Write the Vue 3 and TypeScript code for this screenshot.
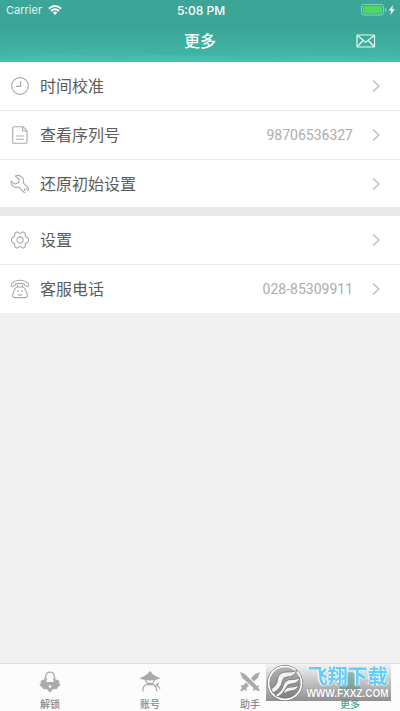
<script setup lang="ts">
interface Row {
  icon: string
  label: string
  value?: string
}

const groups: Row[][] = [
  [
    { icon: 'clock', label: '时间校准' },
    { icon: 'doc', label: '查看序列号', value: '98706536327' },
    { icon: 'wrench', label: '还原初始设置' },
  ],
  [
    { icon: 'gear', label: '设置' },
    { icon: 'phone', label: '客服电话', value: '028-85309911' },
  ],
]

const tabs = [
  { icon: 'unlock', label: '解锁' },
  { icon: 'account', label: '账号' },
  { icon: 'helper', label: '助手' },
  { icon: 'more', label: '更多', active: true },
]
</script>

<template>
  <div class="screen">
    <header class="header">
      <svg class="waves" viewBox="0 0 400 20" preserveAspectRatio="none" aria-hidden="true">
        <path d="M0 12Q30 4 58 11Q105 0 150 12Q200 17 240 10Q285 4 325 13Q370 8 400 10V20H0Z" fill="#4cc4b4" opacity=".2" />
        <path d="M0 17Q60 9 120 15Q180 10 250 16Q320 12 400 16V20H0Z" fill="#55cdbd" opacity=".25" />
      </svg>
      <div class="status">
        <div class="carrier">
          <span>Carrier</span>
          <svg width="14" height="10" viewBox="0 0 14 10" aria-hidden="true">
            <g fill="none" stroke="#fff" stroke-width="1.8">
              <path d="M.8 3.7Q7-1.7 13.2 3.7" />
              <path d="M3 6Q7 2.5 11 6" />
            </g>
            <path d="M4.7 7.5Q7 5.6 9.3 7.5L7 9.9Z" fill="#fff" />
          </svg>
        </div>
        <span class="time">5:08 PM</span>
        <div class="battery">
          <svg width="36" height="12" viewBox="0 0 36 12" aria-hidden="true">
            <rect x="1.500" y=".5" width="22" height="10.5" rx="2.5" fill="none" stroke="#8dcfc4" />
            <rect x="3" y="2" width="19" height="7.5" rx="1.2" fill="#4cd964" />
            <path d="M25 4V8Q26.500 7.500 26.500 6T25 4" fill="#8dcfc4" />
            <path d="M33 1L28.700 6.500H31.200L30.300 11L34.800 5.200H32.200Z" fill="#fff" />
          </svg>
        </div>
      </div>
      <div class="navbar">
        <h1>更多</h1>
        <button class="mail" type="button" aria-label="消息">
          <svg width="20" height="14" viewBox="0 0 20 14" fill="none" stroke="#eafaf7" stroke-width="1.2">
            <rect x="1" y="1" width="17.500" height="12" rx=".8" />
            <path d="M1.500 1.500L9.750 8.300L18 1.500M1.500 12.500L7.200 6.500M18 12.500L12.300 6.500" />
          </svg>
        </button>
      </div>
    </header>

    <main class="content">
      <ul v-for="(group, g) in groups" :key="g" class="group">
        <li v-for="row in group" :key="row.label">
          <button class="row" type="button">
            <svg class="icon" viewBox="0 0 20 20" aria-hidden="true">
              <template v-if="row.icon === 'clock'">
                <circle cx="10" cy="10" r="8.400" />
                <path d="M10.600 5V10.400H6" />
              </template>
              <template v-else-if="row.icon === 'doc'">
                <path d="M3.500 1.700H13L17 5.700V17Q17 18.300 15.700 18.300H3.800Q2.700 18.300 2.700 17V3Q2.700 1.700 3.800 1.700ZM12.700 2V6H16.700M6 11H13.800M6 14.300H13.800" />
              </template>
              <template v-else-if="row.icon === 'wrench'">
                <path d="M5.200 2Q9.200.4 12 3.200Q14.300 5.700 13.200 8.900L18 13.600Q19 15.200 17.700 16.600M15.500 18.300Q14.200 18.700 13.200 17.700L8.700 13Q4.700 14.200 2.200 11.300Q.8 9.500 1.200 7.200L4.700 10.100L8.700 8.600L9.200 5.200L5.200 2" />
                <path d="M14.500 14.500V17M16 14.300L17.800 16.500" />
              </template>
              <template v-else-if="row.icon === 'gear'">
                <path d="M6.500 2.200Q7.700 1.400 8.500 2.700Q10 4.300 11.500 2.700Q12.400 1.400 13.700 2.200Q15.800 3.100 15.300 4.900Q15 7 17.200 7.400Q18.600 7.600 18.600 10T17.200 12.600Q15 13 15.300 15.100Q15.800 16.900 13.700 17.800Q12.400 18.600 11.500 17.300Q10 15.700 8.500 17.300Q7.700 18.600 6.400 17.800Q4.200 16.900 4.700 15.100Q5 13 2.800 12.600Q1.400 12.400 1.400 10T2.800 7.400Q5 7 4.700 4.900Q4.200 3.100 6.500 2.200Z" />
                <circle cx="10" cy="10" r="3.100" />
              </template>
              <template v-else>
                <path d="M2.200 7.700Q.8 6.700 1.500 4.700Q4.500 1.200 10 1.200T18.500 4.700Q19.200 6.700 17.800 7.700L14.700 6.200Q14.700 4.400 10 4.400T5.300 6.200Z" />
                <path d="M7.500 6V8M12.500 6V8M7 8H13Q15.500 9 17.200 15.500Q17.800 18.600 15.500 18.600H4.500Q2.200 18.600 2.800 15.500Q4.500 9 7 8ZM8 11V13.300M12 11V13.300M8 15.500Q10 17 12 15.500" />
              </template>
            </svg>
            <span class="label">{{ row.label }}</span>
            <span v-if="row.value" class="value">{{ row.value }}</span>
            <svg class="chevron" viewBox="0 0 8 14" aria-hidden="true"><path d="M1 1.500L7 7L1 12.500" /></svg>
          </button>
        </li>
      </ul>
    </main>

    <nav class="tabs">
      <a v-for="tab in tabs" :key="tab.label" href="#" class="tab" :class="{ active: tab.active }">
        <svg width="22" height="22" viewBox="0 0 22 22" aria-hidden="true">
          <template v-if="tab.icon === 'unlock'">
            <path d="M4 8.500L1.500 10L2 12L.3 14L3 16L4.500 18.200L7.500 18L11 21.500L14.500 18L17.500 18.200L19 16L21.700 14L20 12L20.500 10L18 8.500L14 11H8Z" fill="currentColor" />
            <path d="M6.500 10V6Q7 1.200 11 1.200T15.500 6V10" fill="none" stroke="currentColor" stroke-width="1.300" />
            <path d="M6 6L4.700 9L7 11L8.500 8M16 6L17.300 9L15 11L13.500 8" fill="currentColor" opacity=".65" />
            <circle cx="11" cy="15.500" r="1.300" fill="#fff" />
          </template>
          <template v-else-if="tab.icon === 'account'">
            <path d="M10 .5H12L13 2.500Q16 5.200 21.700 7.500Q16 9.500 11 9.500T.3 7.500Q6 5.200 9 2.500Z" fill="currentColor" />
            <g fill="none" stroke="currentColor" stroke-width="1.300">
              <path d="M6.500 9Q7 12.500 11 12.500T15.500 9M7 13.500H15M7 13.500Q3.500 15.500 4 20.500M15 13.500Q18 16.500 18 20.500M17.500 12.500L21 18M19.500 12L17 15" />
            </g>
          </template>
          <template v-else-if="tab.icon === 'helper'">
            <path d="M1 1L6 3L18 15L20.500 14L19 17L21 19L19 20.500L17 18.500L14 20L14.500 17L3 6.500ZM21 1L16 3L11.800 7.200L15 10.500L19 6.500ZM7 11.500L4 14.500L1.500 14L3 17L1 19L3 20.500L5 18.500L8 20L7.500 17L10 14.500Z" fill="currentColor" />
          </template>
          <template v-else>
            <path d="M4 8Q4 1 11 1T18 8V11Q21 12 21 16Q21 20 17 20H5Q1 20 1 16Q1 12 4 11Z" fill="currentColor" />
          </template>
        </svg>
        <span>{{ tab.label }}</span>
      </a>
      <div class="stamp">
        <svg class="seal" viewBox="0 0 38 38" aria-hidden="true">
          <defs>
            <linearGradient id="seal-fill" x1="0" y1="0" x2="0" y2="1">
              <stop offset="0" stop-color="#b4b4b4" />
              <stop offset="1" stop-color="#7c7c7c" />
            </linearGradient>
          </defs>
          <circle cx="19" cy="19" r="17.500" fill="url(#seal-fill)" stroke="#777" />
          <circle cx="19" cy="19" r="16.500" fill="none" stroke="#fff" stroke-width="1.600" />
          <g fill="#f2f2f2" stroke="#707070" stroke-width=".8">
            <path d="M5 25Q11 22 11.500 15Q13 8 20 8Q26 8.500 31 6.500Q28 13 21 13Q17 13 16.500 17Q15 25 7 29Z" />
            <path d="M9 31Q15.500 28 17 22Q19 15.500 25 15.500Q30 16 34 13.500Q32 20 25 20Q21.500 20 20 24Q17 30 12 33Z" />
            <path d="M18 27Q21 22 26 23Q30 23 33 20.500Q31 27 25 27Q21 27 18 30Z" />
          </g>
        </svg>
        <div class="stamp-text">
          <strong>飞翔下载</strong>
          <span>WWW.FXXZ.COM</span>
        </div>
      </div>
    </nav>
  </div>
</template>

<style>
body {
  margin: 0;
  background: #f0f0f0;
}
</style>

<style scoped>
.screen {
  display: flex;
  flex-direction: column;
  min-height: 100vh;
  font-family: Inter, "Noto Sans CJK SC", sans-serif;
  color: #5c5c5c;
}
.header {
  position: relative;
  background: linear-gradient(#3ba697 0, #3ba697 45%, #41b9a9 100%);
  color: #fff;
}
.waves {
  position: absolute;
  left: 0;
  bottom: 0;
  width: 100%;
  height: 20px;
}
.status {
  position: relative;
  display: grid;
  grid-template-columns: 1fr auto 1fr;
  align-items: center;
  height: 20px;
  padding: 0 4px 0 6px;
  font-size: 11px;
}
.carrier {
  display: flex;
  align-items: center;
  gap: 6px;
  color: #e4f5f2;
}
.time {
  font-size: 12px;
  font-weight: 500;
}
.battery {
  display: flex;
  justify-content: flex-end;
}
.navbar {
  position: relative;
  display: grid;
  grid-template-columns: 1fr auto 1fr;
  align-items: center;
  height: 42px;
  padding: 0 24px;
}
h1 {
  grid-column: 2;
  margin: 0;
  font-size: 16px;
  line-height: 24px;
  font-weight: 500;
}
button {
  border: 0;
  font: inherit;
  color: inherit;
  cursor: pointer;
}
.mail {
  display: flex;
  justify-self: end;
  padding: 0;
  background: none;
}
.content {
  flex: 1;
  display: flex;
  flex-direction: column;
  gap: 9px;
  background: linear-gradient(#e9e9e9 0, #e9e9e9 200px, #f0f0f0 200px);
}
.group {
  margin: 0;
  padding: 0;
  list-style: none;
  background: #fff;
}
li + li {
  border-top: 1px solid #e9e9e9;
}
.row {
  display: flex;
  align-items: center;
  width: 100%;
  height: 48px;
  padding: 0 20px 0 10px;
  background: #fff;
  text-align: left;
}
li:first-child .row {
  height: 48px;
}
li:nth-child(3) .row {
  height: 47px;
}
.icon {
  width: 20px;
  height: 20px;
  fill: none;
  stroke: #aaa;
  stroke-width: 1.1;
}
.label {
  flex: 1;
  padding-left: 10px;
  font-size: 16px;
  line-height: 24px;
}
.value {
  padding-right: 19px;
  font-family: Roboto, "Liberation Sans", sans-serif;
  font-size: 14px;
  color: #adadad;
}
.chevron {
  width: 8px;
  height: 14px;
  fill: none;
  stroke: #bdbdbd;
  stroke-width: 1.5;
}
.tabs {
  position: relative;
  display: grid;
  grid-template-columns: repeat(4, 1fr);
  height: 47px;
  border-top: 1px solid #dedede;
  background: #fcfcfc;
}
.tab {
  display: flex;
  flex-direction: column;
  align-items: center;
  gap: 5px;
  padding-top: 7px;
  color: #aaa;
  text-decoration: none;
}
.tab span {
  font-size: 10px;
  line-height: 12px;
  font-weight: 500;
  color: #888;
}
.tab.active,
.tab.active span {
  color: #3ba697;
}
.stamp {
  position: absolute;
  right: 9px;
  top: 0;
  display: flex;
  width: 125px;
  height: 37px;
  background: linear-gradient(rgba(235, 235, 235, 0.5), rgba(125, 125, 125, 0.85));
}
.seal {
  flex: none;
  width: 38px;
  height: 38px;
}
.stamp-text {
  display: flex;
  flex-direction: column;
  align-items: center;
  flex: 1;
  padding-top: 2px;
  white-space: nowrap;
}
.stamp-text strong {
  font-size: 20px;
  line-height: 23px;
  font-weight: 700;
  color: #62cdf6;
  text-shadow: 0 0 1px #fff, 1px 0 1px #fff, -1px 0 1px #fff;
}
.stamp-text span {
  font-family: "Liberation Sans", sans-serif;
  font-size: 10px;
  line-height: 10px;
  font-weight: 700;
  color: #fff;
  text-shadow: 0 0 1px #666;
}
</style>
